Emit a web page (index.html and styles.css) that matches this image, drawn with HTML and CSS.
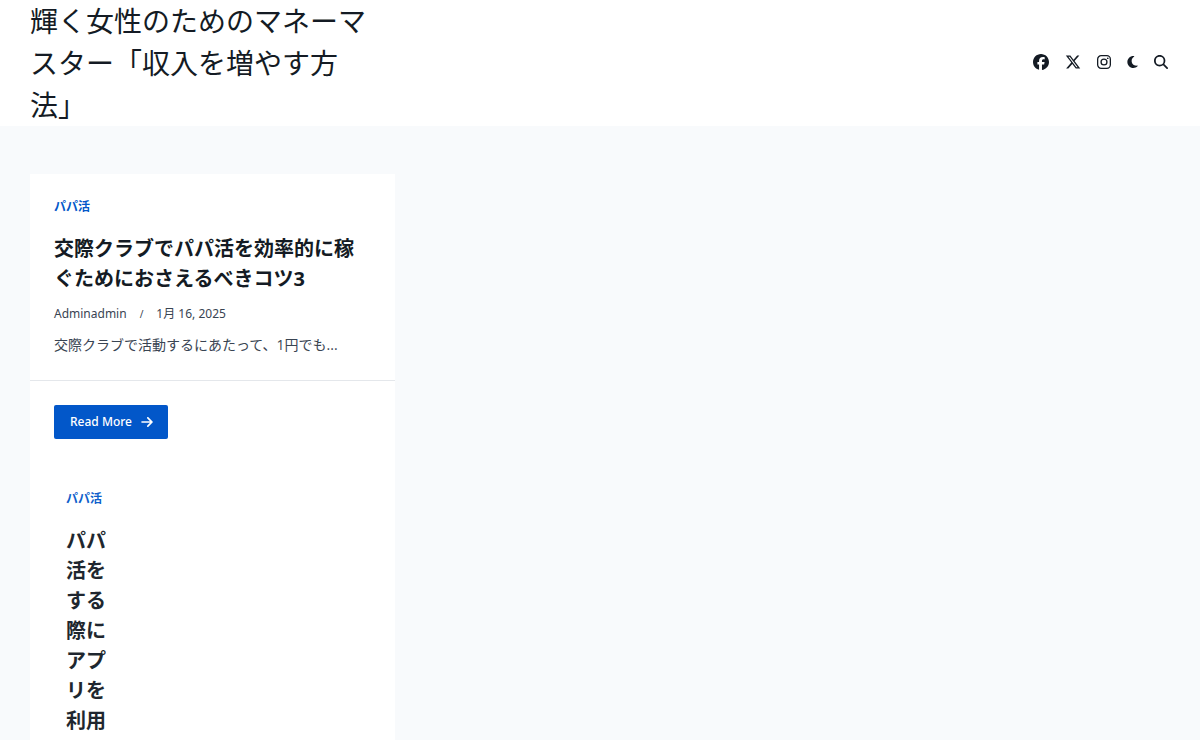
FILE: index.html
```html
<!DOCTYPE html>
<html lang="ja">
<head>
<meta charset="utf-8">
<meta name="viewport" content="width=device-width, initial-scale=1">
<title>輝く女性のためのマネーマスター「収入を増やす方法」</title>
<link rel="stylesheet" href="styles.css">
</head>
<body>
<header class="site-header">
  <p class="site-title"><a href="#">輝く女性のためのマネーマスター「収入を増やす方法」</a></p>
  <nav class="header-tools" aria-label="ソーシャル">
    <a href="#" aria-label="Facebook"><svg class="icon" viewBox="0 0 512 512"><path d="M512 256C512 114.6 397.4 0 256 0S0 114.6 0 256C0 376 82.7 476.8 194.2 504.5V334.2H141.4V256h52.800V222.300c0-87.100 39.400-127.500 125-127.500c16.200 0 44.200 3.200 55.700 6.400V172c-6-.6-16.500-1-29.600-1c-42 0-58.200 15.900-58.200 57.200V256h83.600l-14.400 78.200H287V510.100C413.800 494.800 512 386.900 512 256z"/></svg></a>
    <a href="#" aria-label="X"><svg class="icon" viewBox="0 0 512 512"><path d="M389.200 48h70.600L305.600 224.200 487 464H345L233.700 318.600 106.500 464H35.800L200.700 275.500 26.800 48H172.400L272.900 180.900 389.200 48zM364.400 421.800h39.100L151.100 88h-42L364.400 421.800z"/></svg></a>
    <a href="#" aria-label="Instagram"><svg class="icon icon-medium" viewBox="0 0 14 14"><rect x=".65" y=".65" width="12.700" height="12.700" rx="3.500" fill="none" stroke="currentColor" stroke-width="1.300"/><circle cx="7" cy="7" r="2.950" fill="none" stroke="currentColor" stroke-width="1.300"/><circle cx="10.750" cy="3.250" r=".85"/></svg></a>
    <button type="button" aria-label="ダークモード"><svg class="icon icon-moon" viewBox="0 32 384 448"><path d="M223.500 32C100 32 0 132.300 0 256S100 480 223.500 480c60.600 0 115.500-24.200 155.800-63.400c5-4.900 6.300-12.500 3.100-18.700s-10.100-9.700-17-8.500c-9.800 1.700-19.800 2.600-30.100 2.600c-96.900 0-175.500-78.800-175.500-176c0-65.800 36-123.100 89.300-153.300c6.100-3.500 9.200-10.500 7.700-17.300s-7.300-11.900-14.300-12.500c-6.300-.5-12.600-.8-19-.8z"/></svg></button>
    <button type="button" aria-label="検索"><svg class="icon icon-medium" viewBox="0 0 512 512"><path d="M416 208c0 45.900-14.900 88.300-40 122.700L502.600 457.400c12.500 12.500 12.500 32.800 0 45.300s-32.800 12.500-45.300 0L330.700 376c-34.400 25.200-76.800 40-122.700 40C93.100 416 0 322.900 0 208S93.100 0 208 0S416 93.100 416 208zM208 352a144 144 0 1 0 0-288 144 144 0 1 0 0 288z"/></svg></button>
  </nav>
</header>
<main class="content">
  <div class="post-column">
    <article class="post">
      <div class="post-body">
        <a class="category" href="#">パパ活</a>
        <h2 class="post-title"><a href="#">交際クラブでパパ活を効率的に稼ぐためにおさえるべきコツ3</a></h2>
        <div class="meta"><a href="#">Adminadmin</a><span class="slash">/</span><time datetime="2025-01-16">1月 16, 2025</time></div>
        <p class="excerpt">交際クラブで活動するにあたって、1円でも...</p>
      </div>
      <div class="post-footer">
        <a class="read-more" href="#">Read More<svg class="icon icon-arrow" viewBox="0 64 448 384"><path d="M438.600 278.600c12.500-12.500 12.500-32.800 0-45.300l-160-160c-12.500-12.500-32.800-12.500-45.300 0s-12.500 32.800 0 45.300L338.800 224 32 224c-17.700 0-32 14.300-32 32s14.300 32 32 32l306.700 0L233.400 393.400c-12.500 12.500-12.500 32.800 0 45.300s32.800 12.500 45.300 0l160-160z"/></svg></a>
      </div>
    </article>
    <article class="post post-narrow">
      <a class="category" href="#">パパ活</a>
      <h2 class="post-title"><a href="#">パパ活をする際にアプリを利用</a></h2>
    </article>
  </div>
</main>
</body>
</html>
```
FILE: styles.css
```css
* { box-sizing: border-box; }

body {
  margin: 0;
  min-height: 100vh;
  display: flex;
  flex-direction: column;
  background: #f8fafc;
  color: #141b24;
  font-family: "Noto Sans", "Noto Sans CJK JP", sans-serif;
}

a { color: inherit; text-decoration: none; }
h2, p { margin: 0; }

.site-header {
  display: flex;
  align-items: center;
  justify-content: space-between;
  padding: 0 32px 0 30px;
  background: #fff;
}

.site-title {
  max-width: 340px;
  font-size: 28px;
  line-height: 42px;
  font-weight: 400;
}

.header-tools {
  display: flex;
  align-items: center;
  gap: 16px;
  padding-bottom: 2px;
}
.header-tools a, .header-tools button { display: flex; }
.header-tools button {
  padding: 0;
  border: 0;
  background: none;
  color: inherit;
}

.icon { display: block; width: 16px; height: 16px; fill: currentColor; }
.icon-medium { width: 14px; height: 14px; }
.icon-moon { width: 11px; height: 12px; }
.icon-arrow { width: 12px; height: 10px; }

.content { flex: 1; display: flex; padding: 48px 30px 0; }
.post-column { width: 32%; background: #fff; }

.post-body { padding: 24px 24px 23px; border-bottom: 1px solid #e4e7eb; }

.category {
  display: block;
  color: #0257c9;
  font-size: 12px;
  line-height: 18px;
  font-weight: 700;
}

.post-title {
  margin-top: 18px;
  font-size: 20px;
  line-height: 30px;
  font-weight: 700;
}

.meta {
  display: flex;
  gap: 13px;
  margin-top: 10px;
  color: #394452;
  font-size: 12px;
  line-height: 20px;
}
.slash { font-size: 10px; }

.excerpt {
  margin-top: 9px;
  color: #394452;
  font-family: "Open Sans", "Noto Sans CJK JP", sans-serif;
  font-size: 14px;
  line-height: 24px;
}

.post-footer { padding: 24px; }

.read-more {
  display: inline-flex;
  align-items: center;
  gap: 9px;
  padding: 0 15px 0 16px;
  border-radius: 2px;
  background: #0257c9;
  color: #fff;
  font-size: 12px;
  font-weight: 500;
  line-height: 34px;
}

.post-narrow {
  width: 106px;
  padding: 27px 24px 24px 36px;
  opacity: 0.95;
}
.post-narrow .category { white-space: nowrap; }
```
